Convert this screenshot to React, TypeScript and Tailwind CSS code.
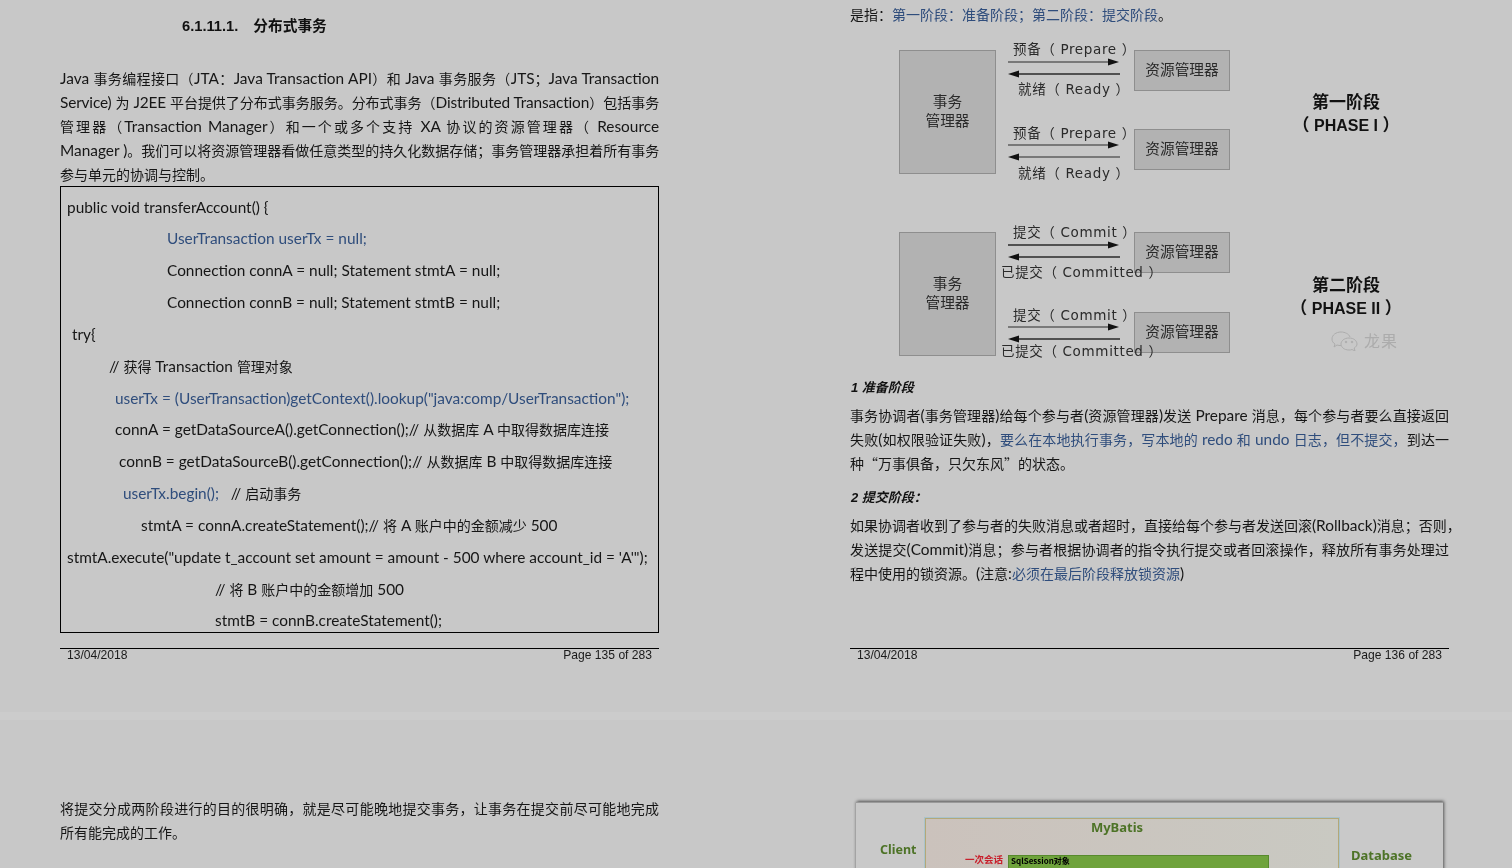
const blue = "text-[#2f4d7c]";

// latin runs are a bit larger than the chinese ones in the pdf, so split them
function Mix({ text }: { text: string }) {
  const parts = text.split(/([\u3000-\u9fff\uff00-\uffef“”]+)/);
  return (
    <>
      {parts.map((p, i) =>
        i % 2 === 1 ? (
          <span key={i} className="font-['Noto_Sans_CJK_SC',sans-serif] text-[14px]">{p}</span>
        ) : (
          <span key={i}>{p}</span>
        )
      )}
    </>
  );
}

function Justified({ children }: { children: React.ReactNode }) {
  return <div className="h-6 leading-[22px] whitespace-nowrap [text-align:justify] [text-align-last:justify]">{children}</div>;
}

function Plain({ children }: { children: React.ReactNode }) {
  return <div className="h-6 leading-[22px] whitespace-nowrap">{children}</div>;
}

function Footer({ page }: { page: number }) {
  return (
    <div className="mt-auto mb-[50px] flex justify-between border-t border-black px-[7px] pb-px font-['Liberation_Sans',sans-serif] text-[12.1px] leading-3 text-[#1a1a1a]">
      <span>13/04/2018</span>
      <span>Page {page} of 283</span>
    </div>
  );
}

const codeLines = [
  { cls: "pl-[6px]", text: "public void transferAccount() {" },
  { cls: "pl-[106px] text-[#2f4d7c]", text: "UserTransaction userTx = null;" },
  { cls: "pl-[106px]", text: "Connection connA = null; Statement stmtA = null;" },
  { cls: "pl-[106px]", text: "Connection connB = null; Statement stmtB = null;" },
  { cls: "pl-[11px]", text: "try{" },
  { cls: "pl-[48px]", text: "// 获得 Transaction 管理对象" },
  { cls: "pl-[54px] text-[#2f4d7c]", text: 'userTx = (UserTransaction)getContext().lookup("java:comp/UserTransaction");' },
  { cls: "pl-[54px]", text: "connA = getDataSourceA().getConnection();// 从数据库 A 中取得数据库连接" },
  { cls: "pl-[58px]", text: "connB = getDataSourceB().getConnection();// 从数据库 B 中取得数据库连接" },
  { cls: "pl-[80px]", text: "stmtA = connA.createStatement();// 将 A 账户中的金额减少 500" },
  { cls: "pl-[6px]", text: "stmtA.execute(\"update t_account set amount = amount - 500 where account_id = 'A'\");" },
  { cls: "pl-[154px]", text: "// 将 B 账户中的金额增加 500" },
  { cls: "pl-[154px]", text: "stmtB = connB.createStatement();" },
];

function Arrow({ cls, dir, thick }: { cls: string; dir: "right" | "left"; thick?: boolean }) {
  return (
    <svg className={`absolute left-[158px] h-[10px] w-[112px] ${cls}`} viewBox="0 0 112 10">
      {dir === "right" ? (
        <>
          <line x1="0" y1="5" x2="102" y2="5" stroke="#2a2a2a" strokeWidth={thick ? 1.4 : 1} />
          <polygon points="111,5 100,1.5 100,8.5" fill="#111" />
        </>
      ) : (
        <>
          <line x1="10" y1="5" x2="112" y2="5" stroke="#2a2a2a" strokeWidth={thick ? 1.4 : 1} />
          <polygon points="0,5 11,1.5 11,8.5" fill="#111" />
        </>
      )}
    </svg>
  );
}

const box = "absolute flex items-center justify-center border border-[#8e8e8e] bg-[#b2b2b2] pb-1 text-[14.7px] leading-[19px] text-[#2a2a2a] text-center";
const label = "absolute h-5 whitespace-nowrap font-['DejaVu_Sans','Noto_Sans_CJK_SC',sans-serif] text-[13.5px] leading-5 tracking-[0.65px] text-[#2a2a2a]";
const phase = "absolute w-[120px] text-center font-bold text-[17px] whitespace-nowrap text-[#111] font-['Liberation_Sans','Noto_Sans_CJK_SC',sans-serif]";

function Diagram() {
  return (
    <div className="relative h-[348px] blur-[0.35px] font-['Noto_Sans_CJK_SC',sans-serif]">
      <div className={`${box} left-[49px] top-[23px] h-[124px] w-[97px]`}><span>事务<br />管理器</span></div>
      <div className={`${box} left-[49px] top-[205px] h-[124px] w-[97px]`}><span>事务<br />管理器</span></div>
      <div className={`${box} left-[284px] top-[23px] h-[41px] w-[96px]`}>资源管理器</div>
      <div className={`${box} left-[284px] top-[102px] h-[41px] w-[96px]`}>资源管理器</div>
      <div className={`${box} left-[284px] top-[205px] h-[41px] w-[96px]`}>资源管理器</div>
      <div className={`${box} left-[284px] top-[285px] h-[41px] w-[96px]`}>资源管理器</div>

      <Arrow cls="top-[30px]" dir="right" />
      <Arrow cls="top-[42px]" dir="left" thick />
      <Arrow cls="top-[113px]" dir="right" />
      <Arrow cls="top-[125px]" dir="left" />
      <Arrow cls="top-[213px]" dir="right" thick />
      <Arrow cls="top-[225px]" dir="left" thick />
      <Arrow cls="top-[295px]" dir="right" />
      <Arrow cls="top-[307px]" dir="left" thick />

      <div className={`${label} left-[163px] top-[12px]`}>预备（ Prepare ）</div>
      <div className={`${label} left-[168px] top-[52px]`}>就绪（ Ready ）</div>
      <div className={`${label} left-[163px] top-[96px]`}>预备（ Prepare ）</div>
      <div className={`${label} left-[168px] top-[136px]`}>就绪（ Ready ）</div>
      <div className={`${label} left-[163px] top-[195px]`}>提交（ Commit ）</div>
      <div className={`${label} left-[151px] top-[235px]`}>已提交（ Committed ）</div>
      <div className={`${label} left-[163px] top-[278px]`}>提交（ Commit ）</div>
      <div className={`${label} left-[151px] top-[314px]`}>已提交（ Committed ）</div>

      <div className={`${phase} left-[436px] top-[65px] leading-[22px]`}>第一阶段<br />（<span className="text-base"> PHASE I </span>）</div>
      <div className={`${phase} left-[436px] top-[248px] leading-[21.5px]`}>第二阶段<br />（<span className="text-base"> PHASE II </span>）</div>

      <svg className="absolute left-[481px] top-[303px] h-[21px] w-[28px]" viewBox="0 0 28 21" fill="none" stroke="#acacac" strokeWidth="1">
        <path d="M10 2c-5 0-9 3-9 7 0 2 1 4 3 5l-1 3 3-2c1 .4 3 .6 4 .6" />
        <path d="M19 7c-1-3-5-5-9-5" />
        <path d="M18 8c-5 0-8 3-8 6s3 6 8 6c1 0 2 0 3-.5l3 1.5-.8-3c1.800-1 2.800-2.500 2.800-4 0-3-3-6-8-6z" />
        <circle cx="15" cy="12" r=".8" fill="#acacac" />
        <circle cx="21" cy="12" r=".8" fill="#acacac" />
      </svg>
      <div className="absolute left-[514px] top-[303px] text-base leading-5 text-[#acacac] tracking-[1px]">龙果</div>
    </div>
  );
}

export default function App() {
  return (
    <div className="h-[868px] w-[1512px] overflow-hidden bg-[#c8c8c8] font-['Lato','Noto_Sans_CJK_SC',sans-serif] text-[15.4px] text-[#161616] blur-[0.2px]">
      <div className="flex h-[712px]">
        {/* page 135 */}
        <div className="ml-[60px] flex w-[599px] flex-col">
          <div className="mt-[14px] h-6 pl-[122px] font-['Liberation_Sans','Noto_Sans_CJK_SC',sans-serif] text-[14.7px] font-bold leading-6 text-[#111]">
            6.1.11.1.<span className="ml-[15px]">分布式事务</span>
          </div>
          <div className="mt-[29px]">
            <Justified><Mix text="Java 事务编程接口（JTA：Java Transaction API）和 Java 事务服务（JTS；Java Transaction" /></Justified>
            <Justified><span className="tracking-[-0.15px]"><Mix text="Service) 为 J2EE 平台提供了分布式事务服务。分布式事务（Distributed Transaction）包括事务" /></span></Justified>
            <Justified><Mix text="管理器（Transaction Manager）和一个或多个支持 XA 协议的资源管理器（ Resource" /></Justified>
            <Justified><Mix text="Manager )。我们可以将资源管理器看做任意类型的持久化数据存储；事务管理器承担着所有事务" /></Justified>
            <Plain><Mix text="参与单元的协调与控制。" /></Plain>
          </div>
          <div className="-mt-px h-[447px] border border-black pt-[4.5px]">
            {codeLines.slice(0, 9).map((line, i) => (
              <div key={i} className={`h-[31.85px] whitespace-pre leading-[31.85px] ${line.cls}`}><Mix text={line.text} /></div>
            ))}
            <div className="h-[31.85px] whitespace-pre pl-[62px] leading-[31.85px]">
              <span className={blue}>userTx.begin();</span><Mix text="   // 启动事务" />
            </div>
            {codeLines.slice(9).map((line, i) => (
              <div key={i} className={`h-[31.85px] whitespace-pre leading-[31.85px] ${line.cls}`}><Mix text={line.text} /></div>
            ))}
          </div>
          <Footer page={135} />
        </div>

        {/* page 136 */}
        <div className="ml-[191px] flex w-[599px] flex-col">
          <div className="mt-[3px] h-6 leading-[22px] whitespace-nowrap">
            <Mix text="是指：" /><span className={blue}><Mix text="第一阶段：准备阶段；第二阶段：提交阶段" /></span><Mix text="。" />
          </div>
          <Diagram />
          <div className="mt-px h-6 pl-px font-['Liberation_Sans','Noto_Sans_CJK_SC',sans-serif] text-[13px] font-bold italic leading-6 text-[#111]">1 准备阶段</div>
          <div className="mt-[4px]">
            <Justified><Mix text="事务协调者(事务管理器)给每个参与者(资源管理器)发送 Prepare 消息，每个参与者要么直接返回" /></Justified>
            <Justified>
              <Mix text="失败(如权限验证失败)，" /><span className={blue}><Mix text="要么在本地执行事务，写本地的 redo 和 undo 日志，但不提交，" /></span><Mix text="到达一" />
            </Justified>
            <Plain><Mix text="种“万事俱备，只欠东风”的状态。" /></Plain>
          </div>
          <div className="mt-[10px] h-6 pl-px font-['Liberation_Sans','Noto_Sans_CJK_SC',sans-serif] text-[13px] font-bold italic leading-6 text-[#111]">2 提交阶段：</div>
          <div className="mt-[4px]">
            <Plain><Mix text="如果协调者收到了参与者的失败消息或者超时，直接给每个参与者发送回滚(Rollback)消息；否则，" /></Plain>
            <Justified><Mix text="发送提交(Commit)消息；参与者根据协调者的指令执行提交或者回滚操作，释放所有事务处理过" /></Justified>
            <Plain>
              <Mix text="程中使用的锁资源。(注意:" /><span className={blue}><Mix text="必须在最后阶段释放锁资源" /></span>)
            </Plain>
          </div>
          <Footer page={136} />
        </div>
      </div>

      <div className="h-2 bg-[#cccccc]" />

      <div className="flex h-[148px]">
        <div className="ml-[60px] w-[599px] pt-[77px]">
          <Justified><Mix text="将提交分成两阶段进行的目的很明确，就是尽可能晚地提交事务，让事务在提交前尽可能地完成" /></Justified>
          <Plain><Mix text="所有能完成的工作。" /></Plain>
        </div>
        <div className="ml-[197px] mt-[82px] flex h-[80px] w-[587px] items-start border-t border-[#9a9a9a] bg-[#c9c9c9] font-['Noto_Sans',sans-serif] font-bold text-[#4d7327] shadow-[1px_-1px_3px_#555,-1px_0_2px_#aaa]">
          <div className="w-[69px] pl-[24px] pt-[39px] text-[12.5px] leading-4">Client</div>
          <div className="mt-[15px] h-[70px] w-[414px] border-x border-t border-[#b3a878] bg-gradient-to-r from-[#cbc2bc] to-[#c9c9c2] outline outline-[#a9c3cc]">
            <div className="pr-[30px] text-center text-[13px] leading-[16px]">MyBatis</div>
            <div className="mt-[21px] flex items-start">
              <div className="-mt-[3px] w-[82px] pr-[5px] text-right font-['Noto_Sans_CJK_SC',sans-serif] text-[9.5px] leading-[12px] text-[#c8202c]">一次会话</div>
              <div className="-mt-px h-[20px] w-[261px] border border-[#578a2c] bg-[#6fa33c] pl-[2px] font-['Noto_Sans_CJK_SC',sans-serif] text-[8px] leading-[10px] text-black">SqlSession对象</div>
            </div>
          </div>
          <div className="pl-[12px] pt-[44px] text-[13px] leading-4">Database</div>
        </div>
      </div>
    </div>
  );
}
